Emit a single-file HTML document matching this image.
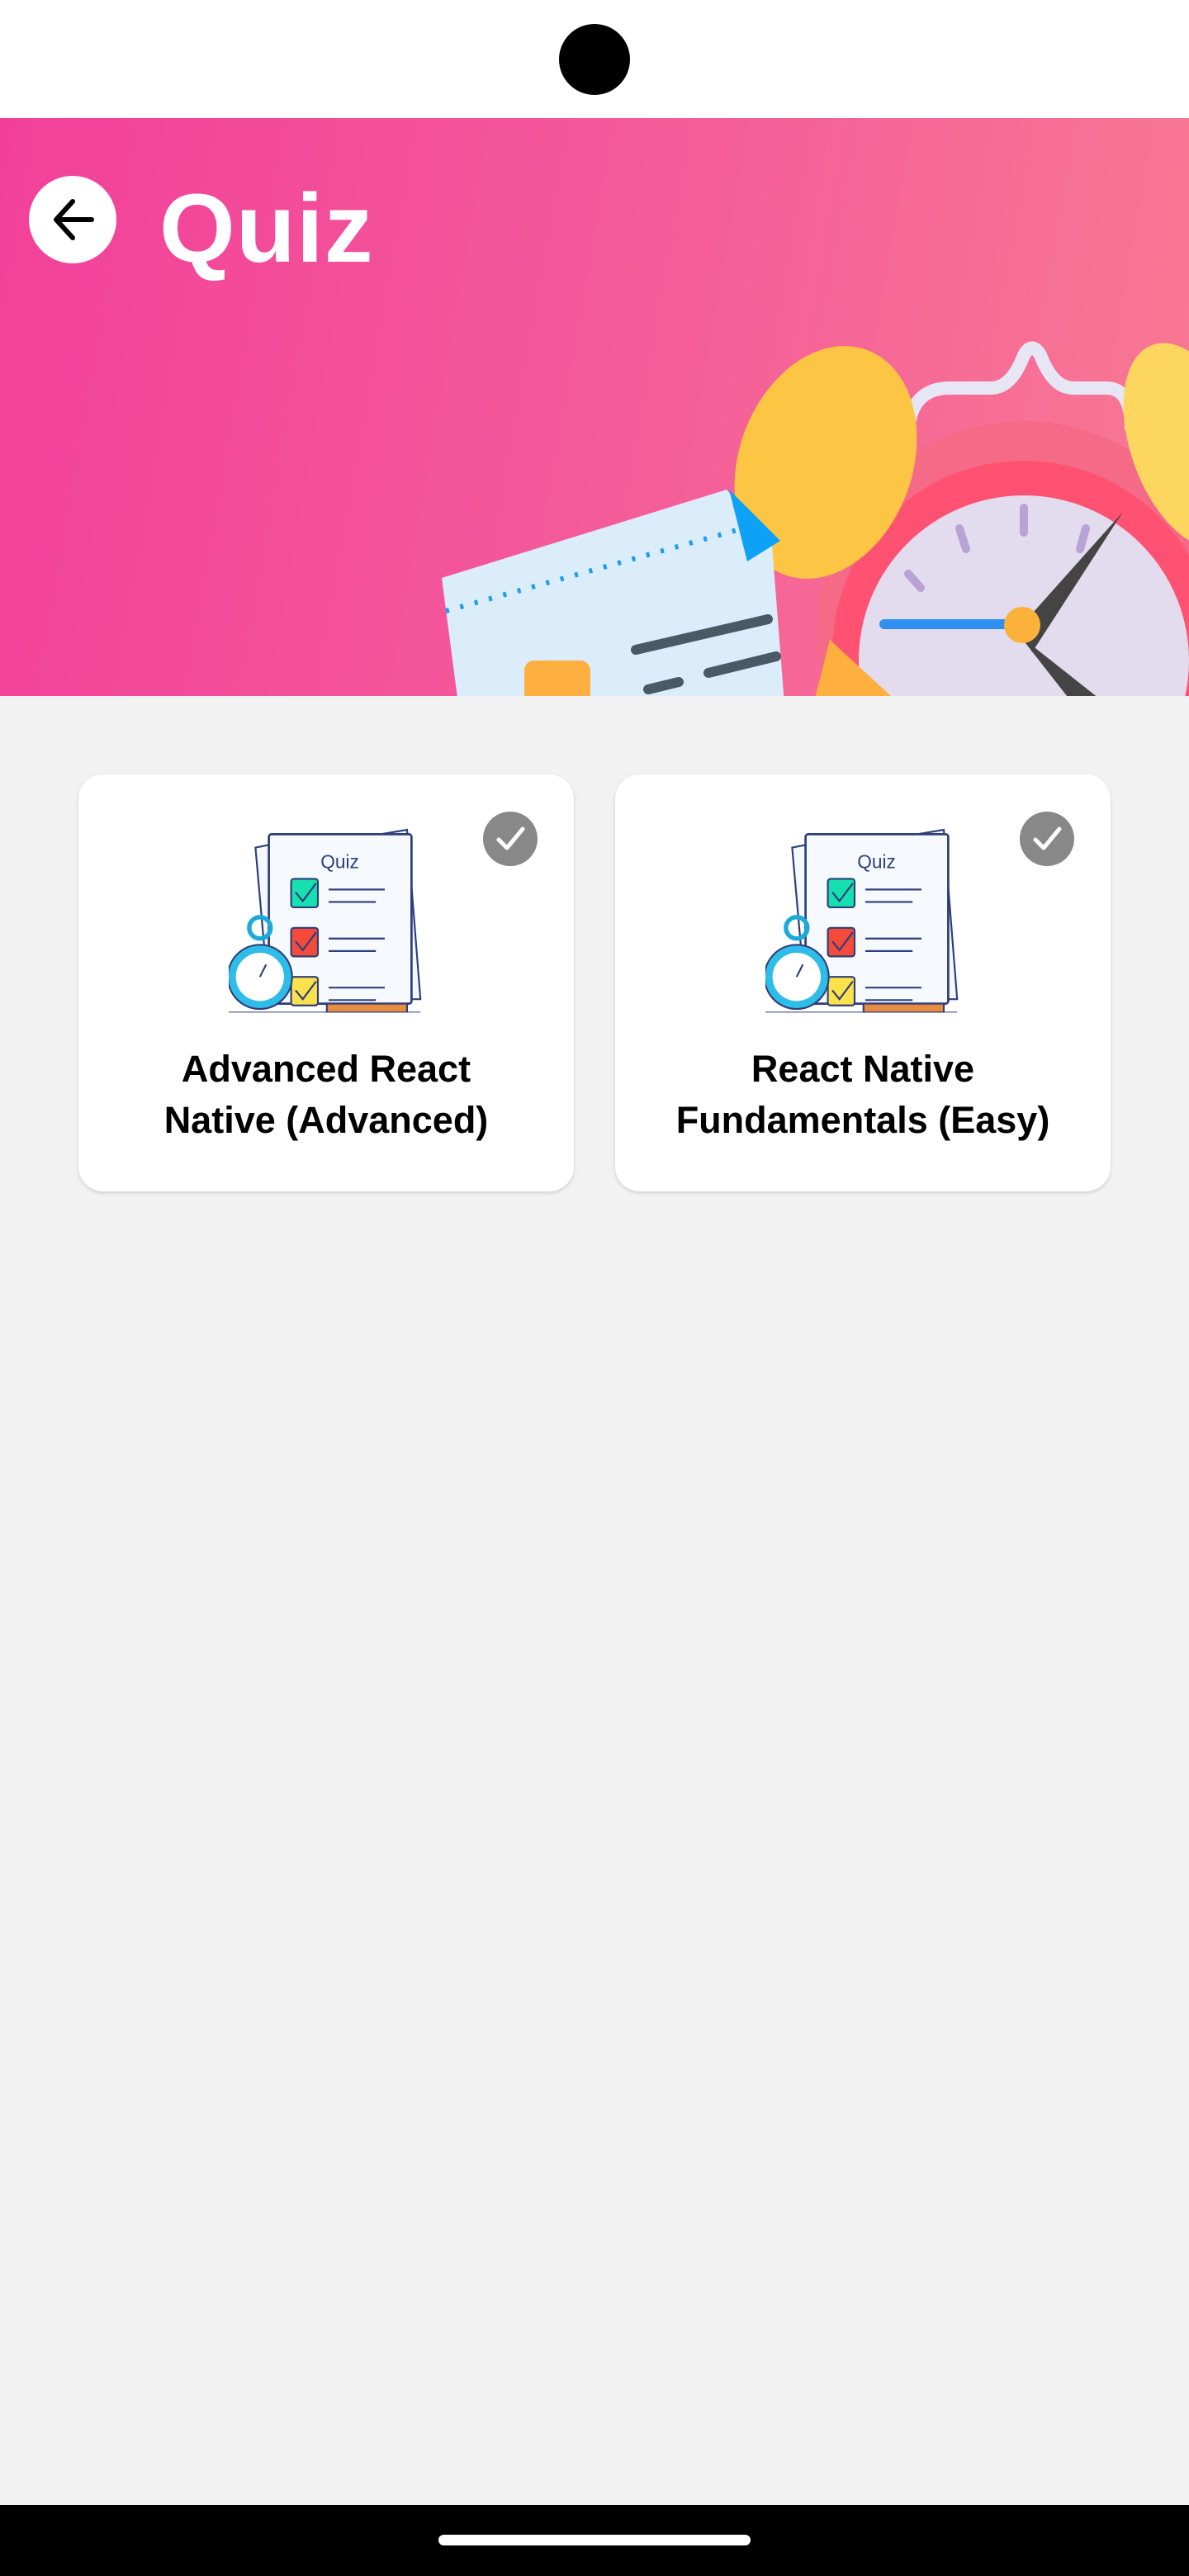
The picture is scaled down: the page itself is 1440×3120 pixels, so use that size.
<!DOCTYPE html>
<html><head><meta charset="utf-8"><style>
*{margin:0;padding:0;box-sizing:border-box}
body{width:1440px;height:3120px;background:#f2f2f2;font-family:"Liberation Sans",sans-serif;position:relative;overflow:hidden}
.status{position:absolute;left:0;top:0;width:1440px;height:143px;background:#fff}
.cam{position:absolute;left:677px;top:29px;width:86px;height:86px;border-radius:50%;background:#000}
.hdr{position:absolute;left:0;top:143px;width:1440px;height:700px;background:linear-gradient(100deg,#f2409a 0%,#f4579a 45%,#f87a93 100%);overflow:hidden}
.back{position:absolute;left:35px;top:70px;width:106px;height:106px;border-radius:50%;background:#fff}
.title{position:absolute;left:193px;top:66px;color:#fff;font-weight:bold;font-size:118px;letter-spacing:1px}
.card{position:absolute;top:938px;width:600px;height:505px;background:#fff;border-radius:30px;box-shadow:0 2px 4px rgba(0,0,0,.15)}
.chk{position:absolute;left:490px;top:45px;width:66px;height:66px;border-radius:50%;background:#888}
.ill{position:absolute;left:182px;top:40px;width:260px;height:250px}
.ct{position:absolute;left:0;top:326px;width:600px;text-align:center;font-weight:bold;font-size:45px;line-height:62px;color:#000}
.nav{position:absolute;left:0;top:3034px;width:1440px;height:86px;background:#000}
.pill{position:absolute;left:531px;top:36px;width:378px;height:13px;border-radius:7px;background:#fff}
</style></head><body>
<div class="status"><div class="cam"></div></div>
<div class="hdr">
<div class="back"><svg width="106" height="106" viewBox="0 0 106 106"><path d="M36 53H76M53 31L33 53L53 75" stroke="#000" stroke-width="6" fill="none" stroke-linecap="round" stroke-linejoin="round"/></svg></div>
<div class="title">Quiz</div>
<svg style="position:absolute;left:520px;top:210px" width="920" height="500" viewBox="520 353 920 500">
<path d="M1100 520 Q1105 470 1150 470 L1200 470 Q1225 470 1240 430 Q1250 413 1260 430 Q1275 470 1300 470 L1340 470 Q1370 470 1370 520" stroke="#e6e6f5" stroke-width="16" fill="none"/>
<circle cx="1240" cy="760" r="250" fill="#f56a86"/>
<circle cx="1240" cy="790" r="232" fill="#ff5272"/>
<circle cx="1240" cy="800" r="200" fill="#e3dcef"/>
<ellipse cx="1000" cy="560" rx="105" ry="145" transform="rotate(20 1000 560)" fill="#fdc544"/>
<ellipse cx="1440" cy="540" rx="70" ry="130" transform="rotate(-20 1440 540)" fill="#fdd660"/>
<g stroke="#b9a2d4" stroke-width="10" stroke-linecap="round"><line x1="1240" y1="615" x2="1240" y2="645"/><line x1="1162" y1="640" x2="1170" y2="665"/><line x1="1100" y1="695" x2="1115" y2="712"/><line x1="1315" y1="640" x2="1308" y2="665"/></g>
<path d="M1235 760 L1360 620 L1250 790 Z" fill="#444"/>
<path d="M1235 770 L1340 853 L1300 853 Z" fill="#444"/>
<rect x="1065" y="750" width="170" height="12" rx="6" fill="#2f8ff0"/>
<circle cx="1238" cy="757" r="22" fill="#fbb13a"/>
<path d="M535 700 L880 593 L935 660 L950 853 L555 853 Z" fill="#dbecfb"/>
<path d="M883 593 L945 655 L905 680 Z" fill="#0ea2f7"/>
<line x1="540" y1="740" x2="900" y2="640" stroke="#1c9cf0" stroke-width="6" stroke-dasharray="4 14"/>
<g stroke="#475a66" stroke-width="12" stroke-linecap="round"><line x1="770" y1="787" x2="930" y2="750"/><line x1="858" y1="815" x2="940" y2="795"/><line x1="785" y1="835" x2="822" y2="826"/></g>
<rect x="635" y="800" width="80" height="60" rx="12" fill="#fdb040"/>
<path d="M1005 775 L1090 853 L985 853 Z" fill="#fdb040"/>
</svg>
</div>
<div class="card" style="left:95px"><div class="chk"><svg width="66" height="66"><path d="M19 34L29 44L48 21" stroke="#fff" stroke-width="5" fill="none" stroke-linecap="round" stroke-linejoin="round"/></svg></div>
<div class="ill"><svg width="240" height="230" viewBox="0 0 240 230" style="transform:scale(1.08);transform-origin:0 0">
<path d="M30 45L55 40L62 210L45 215Z" fill="#f4f8ff" stroke="#2e3e7a" stroke-width="2"/>
<path d="M140 35L200 25L215 215L150 215Z" fill="#f4f8ff" stroke="#2e3e7a" stroke-width="2"/>
<rect x="45" y="30" width="160" height="190" rx="3" fill="#f6faff" stroke="#2e3e7a" stroke-width="2.5"/>
<text x="103" y="68" font-size="21" fill="#2e3e7a" font-family="Liberation Sans">Quiz</text>
<rect x="70" y="80" width="30" height="32" rx="3" fill="#17e0b0" stroke="#2e3e7a" stroke-width="2"/>
<rect x="70" y="135" width="30" height="32" rx="3" fill="#f44a3b" stroke="#2e3e7a" stroke-width="2"/>
<rect x="70" y="190" width="30" height="32" rx="3" fill="#fbe14a" stroke="#2e3e7a" stroke-width="2"/>
<g stroke="#2e3e7a" stroke-width="2" fill="none"><path d="M75 95L83 105L98 85"/><path d="M75 150L83 160L98 140"/><path d="M75 205L83 215L98 195"/>
<path d="M112 92H175M112 106H165M112 147H175M112 161H165M112 202H175M112 216H165"/></g>
<circle cx="35" cy="135" r="12" fill="none" stroke="#1aa9d9" stroke-width="5"/>
<circle cx="35" cy="190" r="36" fill="#2ebde8" stroke="#2e3e7a" stroke-width="2"/>
<circle cx="35" cy="190" r="27" fill="#fff"/>
<path d="M35 190L42 176" stroke="#2e3e7a" stroke-width="2"/>
<rect x="110" y="220" width="90" height="10" fill="#e88c3f" stroke="#2e3e7a" stroke-width="2"/>
<line x1="0" y1="230" x2="215" y2="230" stroke="#2e3e7a" stroke-width="2"/>
</svg></div>
<div class="ct">Advanced React<br>Native (Advanced)</div></div>
<div class="card" style="left:745px"><div class="chk"><svg width="66" height="66"><path d="M19 34L29 44L48 21" stroke="#fff" stroke-width="5" fill="none" stroke-linecap="round" stroke-linejoin="round"/></svg></div>
<div class="ill"><svg width="240" height="230" viewBox="0 0 240 230" style="transform:scale(1.08);transform-origin:0 0">
<path d="M30 45L55 40L62 210L45 215Z" fill="#f4f8ff" stroke="#2e3e7a" stroke-width="2"/>
<path d="M140 35L200 25L215 215L150 215Z" fill="#f4f8ff" stroke="#2e3e7a" stroke-width="2"/>
<rect x="45" y="30" width="160" height="190" rx="3" fill="#f6faff" stroke="#2e3e7a" stroke-width="2.5"/>
<text x="103" y="68" font-size="21" fill="#2e3e7a" font-family="Liberation Sans">Quiz</text>
<rect x="70" y="80" width="30" height="32" rx="3" fill="#17e0b0" stroke="#2e3e7a" stroke-width="2"/>
<rect x="70" y="135" width="30" height="32" rx="3" fill="#f44a3b" stroke="#2e3e7a" stroke-width="2"/>
<rect x="70" y="190" width="30" height="32" rx="3" fill="#fbe14a" stroke="#2e3e7a" stroke-width="2"/>
<g stroke="#2e3e7a" stroke-width="2" fill="none"><path d="M75 95L83 105L98 85"/><path d="M75 150L83 160L98 140"/><path d="M75 205L83 215L98 195"/>
<path d="M112 92H175M112 106H165M112 147H175M112 161H165M112 202H175M112 216H165"/></g>
<circle cx="35" cy="135" r="12" fill="none" stroke="#1aa9d9" stroke-width="5"/>
<circle cx="35" cy="190" r="36" fill="#2ebde8" stroke="#2e3e7a" stroke-width="2"/>
<circle cx="35" cy="190" r="27" fill="#fff"/>
<path d="M35 190L42 176" stroke="#2e3e7a" stroke-width="2"/>
<rect x="110" y="220" width="90" height="10" fill="#e88c3f" stroke="#2e3e7a" stroke-width="2"/>
<line x1="0" y1="230" x2="215" y2="230" stroke="#2e3e7a" stroke-width="2"/>
</svg></div>
<div class="ct">React Native<br>Fundamentals (Easy)</div></div>
<div class="nav"><div class="pill"></div></div>
</body></html>
